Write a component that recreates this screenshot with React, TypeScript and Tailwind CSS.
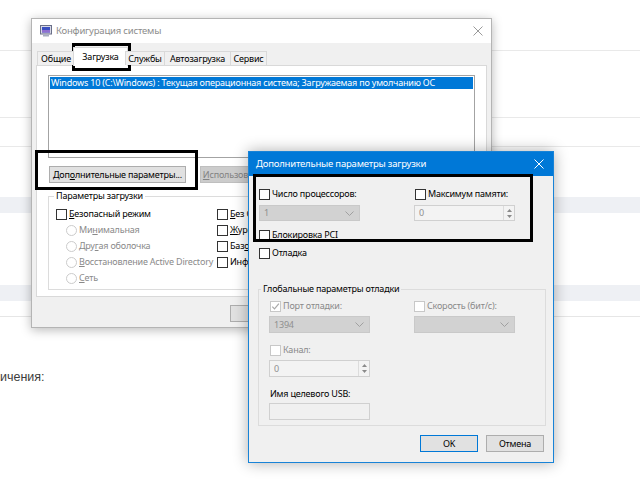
import React from 'react'

type CheckProps = {
  label: React.ReactNode
  checked?: boolean
  disabled?: boolean
}

function Box({ checked = false, disabled = false }: { checked?: boolean; disabled?: boolean }) {
  return (
    <span
      className={`flex h-[11px] w-[11px] shrink-0 items-center justify-center border bg-white ${
        disabled ? 'border-[#c8c8c8]' : 'border-[#333333]'
      }`}
    >
      {checked && (
        <svg width="9" height="9" viewBox="0 0 9 9">
          <path d="M1.3 4.6 L3.5 6.9 L7.9 1.6" fill="none" stroke="#a9a9a9" strokeWidth="1.2" />
        </svg>
      )}
    </span>
  )
}

function Check({ label, checked, disabled }: CheckProps) {
  return (
    <div className={`flex h-[12px] items-center gap-[2px] ${disabled ? 'text-[#8a8a8a]' : 'text-black'}`}>
      <Box checked={checked} disabled={disabled} />
      <span className="whitespace-nowrap">{label}</span>
    </div>
  )
}

function Radio({ label }: { label: React.ReactNode }) {
  return (
    <div className="flex h-[12px] items-center gap-[2px] text-[#8a8a8a]">
      <span className="h-[11px] w-[11px] shrink-0 rounded-full border border-[#cccccc] bg-white" />
      <span className="whitespace-nowrap">{label}</span>
    </div>
  )
}

function Chevron() {
  return (
    <svg width="9" height="5" viewBox="0 0 9 5">
      <path d="M0.5 0.5 L4.5 4.5 L8.5 0.5" fill="none" stroke="#a0a0a0" strokeWidth="1" />
    </svg>
  )
}

function Combo({ value, h = 'h-[17px]' }: { value: string; h?: string }) {
  return (
    <div className={`flex ${h} w-[101px] items-center justify-between border border-[#c9c9c9] bg-[#d2d2d2] pl-[4px] pr-[5px] text-[#8f8f8f]`}>
      <span>{value}</span>
      <Chevron />
    </div>
  )
}

function Spin({ value, h = 'h-[17px]' }: { value: string; h?: string }) {
  return (
    <div className={`flex ${h} w-[101px] border border-[#d0d0d0] bg-[#f3f3f3] text-[#8f8f8f]`}>
      <span className="flex flex-1 items-center pl-[4px]">{value}</span>
      <div className="flex w-[11px] flex-col items-center justify-center gap-[3px] border-l border-[#dcdcdc]">
        <svg width="5" height="3" viewBox="0 0 5 3">
          <path d="M0 3 L2.5 0 L5 3 Z" fill="#8a8a8a" />
        </svg>
        <svg width="5" height="3" viewBox="0 0 5 3">
          <path d="M0 0 L2.5 3 L5 0 Z" fill="#8a8a8a" />
        </svg>
      </div>
    </div>
  )
}

function CloseX({ color }: { color: string }) {
  return (
    <svg width="10" height="10" viewBox="0 0 10 10">
      <path d="M0.5 0.5 L9.5 9.5 M9.5 0.5 L0.5 9.5" stroke={color} strokeWidth="1" />
    </svg>
  )
}

function MsconfigIcon() {
  return (
    <svg width="12" height="12" viewBox="0 0 12 12">
      <rect x="0.5" y="0.5" width="11" height="8.5" fill="#d7d9e6" stroke="#6a6f88" />
      <rect x="2" y="2" width="8" height="5.5" fill="#3a4fc2" />
      <rect x="2" y="5" width="8" height="2.5" fill="#8f6fd0" />
      <rect x="3" y="9.5" width="6" height="2" fill="#a8acc0" />
    </svg>
  )
}

function WinButton({ children, width, primary, disabled }: { children: React.ReactNode; width: string; primary?: boolean; disabled?: boolean }) {
  return (
    <div
      className={`flex h-[17px] shrink-0 items-center justify-center whitespace-nowrap border ${width} ${
        disabled
          ? 'border-[#bfbfbf] bg-[#cccccc] text-[#838383]'
          : primary
          ? 'border-[#0078d7] bg-[#e1e1e1] text-black'
          : 'border-[#adadad] bg-[#e1e1e1] text-black'
      }`}
    >
      {children}
    </div>
  )
}

const tabs = [
  { name: 'Общие', w: 'w-[38px]' },
  { name: 'Загрузка', w: 'w-[55px]', active: true },
  { name: 'Службы', w: 'w-[40px]' },
  { name: 'Автозагрузка', w: 'w-[67px]' },
  { name: 'Сервис', w: 'w-[37px]' },
]

export default function App() {
  return (
    <div className="relative h-[500px] w-[640px] overflow-hidden bg-white font-['Noto_Sans',sans-serif] text-[9px] leading-[12px] tracking-[-0.2px]">
      {/* web page behind the windows */}
      <div className="h-[51px] border-b border-[#e9e9e9]" />
      <div className="h-[67px] border-b border-[#e9e9e9]" />
      <div className="h-[29px] border-b border-[#e9e9e9]" />
      <div className="h-[50px]" />
      <div className="h-[16px] bg-[#eef0f4]" />
      <div className="h-[72px]" />
      <div className="h-[16px] bg-[#eef0f4]" />
      <div className="h-[16px] border-b border-[#e6e6e6]" />
      <p className="mt-[52px] font-['Liberation_Sans',sans-serif] text-[12.5px] leading-[16px] tracking-normal text-[#3c3c3c]">ичения:</p>

      {/* Конфигурация системы */}
      <div className="absolute left-[31px] top-[18px] h-[310px] w-[461px] overflow-hidden border border-[#b4b4b4] bg-[#f0f0f0] shadow-[0_2px_10px_rgba(0,0,0,0.28)]">
        <div className="flex h-[24px] items-center bg-white pl-[8px] pr-[8px]">
          <MsconfigIcon />
          <span className="ml-[4px] flex-1 text-[9.5px] text-[#8c8c8c]">Конфигурация системы</span>
          <CloseX color="#9a9a9a" />
        </div>
        <div className="px-[4px] pt-[4px]">
          <div className="relative z-10 ml-[2px] flex h-[18px] items-end">
            {tabs.map((t) =>
              t.active ? (
                <div
                  key={t.name}
                  className={`-mx-[2px] -mb-px flex h-[19px] items-center justify-center border border-b-0 border-[#d9d9d9] bg-white ${t.w}`}
                >
                  {t.name}
                </div>
              ) : (
                <div
                  key={t.name}
                  className={`-ml-px flex h-[14px] items-center justify-center border border-b-0 border-[#d9d9d9] bg-[#f0f0f0] ${t.w}`}
                >
                  {t.name}
                </div>
              )
            )}
          </div>
          <div className="h-[232px] border border-[#d9d9d9] bg-white pl-[11px] pt-[9px]">
            <div className="h-[83px] w-[427px] border border-[#a3a3a3] bg-white p-px">
              <div className="h-[12px] whitespace-nowrap bg-[#0078d7] pl-px text-white">
                Windows 10 (C:\Windows) : Текущая операционная система; Загружаемая по умолчанию ОС
              </div>
            </div>
            <div className="ml-px mt-[8px] flex gap-[14px]">
              <WinButton width="w-[137px]">
                Доп<span className="underline">о</span>лнительные параметры...
              </WinButton>
              <WinButton width="w-[128px]" disabled>
                <span className="underline">И</span>спользовать по умолчанию
              </WinButton>
              <WinButton width="w-[60px]" disabled>
                <span className="underline">У</span>далить
              </WinButton>
            </div>
            <fieldset className="mt-[7px] h-[100px] w-[427px] border border-[#dcdcdc]">
              <legend className="ml-[5px] px-[2px]">Параметры загрузки</legend>
              <div className="flex pl-[7px] pt-[6px]">
                <div className="flex w-[161px] flex-col gap-[4px]">
                  <Check label={<><span className="underline">Б</span>езопасный режим</>} />
                  <div className="flex flex-col gap-[4px] pl-[10px]">
                    <Radio label={<>Ми<span className="underline">н</span>имальная</>} />
                    <Radio label={<>Дру<span className="underline">г</span>ая оболочка</>} />
                    <Radio label={<><span className="underline">В</span>осстановление Active Directory</>} />
                    <Radio label={<><span className="underline">С</span>еть</>} />
                  </div>
                </div>
                <div className="flex flex-col gap-[4px]">
                  <Check label={<><span className="underline">Б</span>ез GUI</>} />
                  <Check label={<><span className="underline">Ж</span>урнал загрузки</>} />
                  <Check label={<>Баз<span className="underline">о</span>вое видео</>} />
                  <Check label={<>Информация об ОС</>} />
                </div>
              </div>
            </fieldset>
          </div>
          <div className="mt-[8px] flex gap-[6px] pl-[194px]">
            <WinButton width="w-[58px]">ОК</WinButton>
            <WinButton width="w-[58px]">Отмена</WinButton>
            <WinButton width="w-[58px]">Применить</WinButton>
            <WinButton width="w-[58px]">Справка</WinButton>
          </div>
        </div>
      </div>

      {/* Дополнительные параметры загрузки */}
      <div className="absolute left-[248px] top-[151px] h-[312px] w-[306px] border border-[#1883d7] bg-[#f0f0f0] shadow-[0_0_14px_rgba(0,0,0,0.32)]">
        <div className="flex h-[24px] items-center bg-[#0078d7] pl-[7px] pr-[9px] text-white">
          <span className="flex-1 text-[9.5px]">Дополнительные параметры загрузки</span>
          <CloseX color="#ffffff" />
        </div>
        <div className="pl-[10px] pt-[12px]">
          <div className="flex">
            <div className="w-[155px]">
              <Check label="Число процессоров:" />
              <div className="mt-[5px]">
                <Combo value="1" h="h-[16px]" />
              </div>
            </div>
            <div>
              <div className="ml-px">
                <Check label="Максимум памяти:" />
              </div>
              <div className="mt-[5px]">
                <Spin value="0" h="h-[16px]" />
              </div>
            </div>
          </div>
          <div className="mt-[8px]">
            <Check label="Блокировка PCI" />
          </div>
          <div className="mt-[6px]">
            <Check label="Отладка" />
          </div>
          <fieldset className="-ml-px mt-[24px] h-[143px] w-[288px] border border-[#dcdcdc]">
            <legend className="ml-[2px] px-[2px]">Глобальные параметры отладки</legend>
            <div className="flex pl-[10px] pt-[5px]">
              <div className="w-[145px]">
                <div className="ml-px">
                  <Check label="Порт отладки:" checked disabled />
                </div>
                <div className="mt-[4px]">
                  <Combo value="1394" />
                </div>
              </div>
              <div>
                <Check label="Скорость (бит/с):" disabled />
                <div className="mt-[4px]">
                  <Combo value="" />
                </div>
              </div>
            </div>
            <div className="pl-[10px]">
              <div className="ml-px mt-[11px]">
                <Check label="Канал:" disabled />
              </div>
              <div className="mt-[4px]">
                <Spin value="0" />
              </div>
              <div className="ml-px mt-[11px] h-[12px]">Имя целевого USB:</div>
              <div className="mt-[3px] h-[17px] w-[101px] border border-[#d0d0d0] bg-[#f0f0f0]" />
            </div>
          </fieldset>
          <div className="mt-[9px] flex justify-end gap-[8px] pr-[9px]">
            <WinButton width="w-[58px]" primary>
              OK
            </WinButton>
            <WinButton width="w-[58px]">Отмена</WinButton>
          </div>
        </div>
      </div>

      {/* black highlight frames */}
      <div className="absolute left-[72px] top-[43px] h-[28px] w-[59px] border-[3px] border-black" />
      <div className="absolute left-[35px] top-[150px] h-[40px] w-[163px] border-[3px] border-black" />
      <div className="absolute left-[253px] top-[174px] h-[68px] w-[280px] border-[3px] border-black" />
    </div>
  )
}
